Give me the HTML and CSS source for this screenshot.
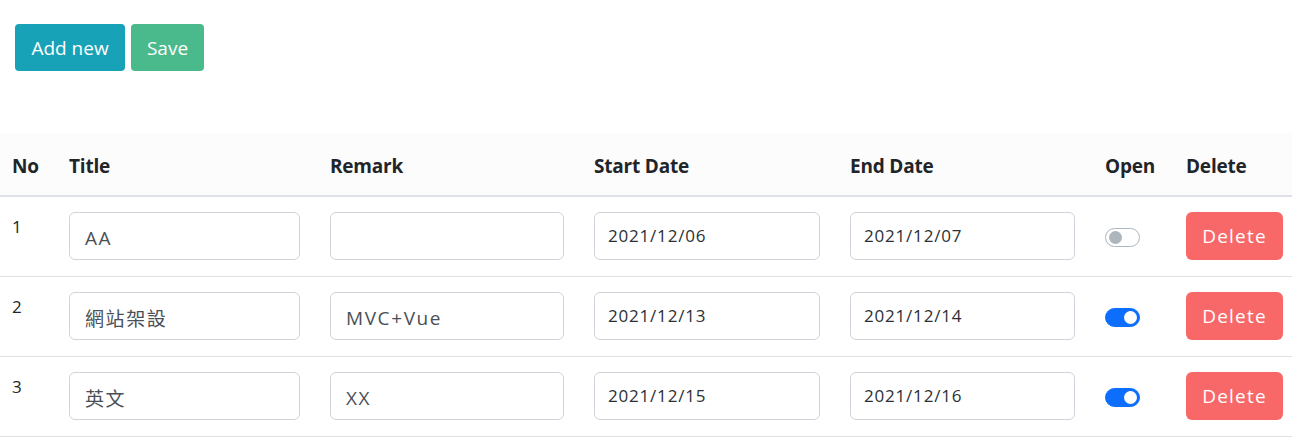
FILE: index.html
```html
<!DOCTYPE html>
<html>
<head>
<meta charset="utf-8">
<link rel="stylesheet" href="styles.css">
</head>
<body>
<div class="toolbar">
  <button class="btn btn-teal">Add new</button>
  <button class="btn btn-green">Save</button>
</div>
<div class="table">
  <div class="row head">
    <div class="cell">No</div>
    <div class="cell">Title</div>
    <div class="cell">Remark</div>
    <div class="cell">Start Date</div>
    <div class="cell">End Date</div>
    <div class="cell">Open</div>
    <div class="cell">Delete</div>
  </div>
  <div class="row">
    <div class="cell num">1</div>
    <div class="cell"><div class="input text">AA</div></div>
    <div class="cell"><div class="input text"></div></div>
    <div class="cell"><div class="input date">2021/12/06</div></div>
    <div class="cell"><div class="input date">2021/12/07</div></div>
    <div class="cell sw"><span class="switch"></span></div>
    <div class="cell"><button class="btn btn-red">Delete</button></div>
  </div>
  <div class="row">
    <div class="cell num">2</div>
    <div class="cell"><div class="input text">網站架設</div></div>
    <div class="cell"><div class="input text">MVC+Vue</div></div>
    <div class="cell"><div class="input date">2021/12/13</div></div>
    <div class="cell"><div class="input date">2021/12/14</div></div>
    <div class="cell sw"><span class="switch on"></span></div>
    <div class="cell"><button class="btn btn-red">Delete</button></div>
  </div>
  <div class="row">
    <div class="cell num">3</div>
    <div class="cell"><div class="input text">英文</div></div>
    <div class="cell"><div class="input text">XX</div></div>
    <div class="cell"><div class="input date">2021/12/15</div></div>
    <div class="cell"><div class="input date">2021/12/16</div></div>
    <div class="cell sw"><span class="switch on"></span></div>
    <div class="cell"><button class="btn btn-red">Delete</button></div>
  </div>
</div>
</body>
</html>
```
FILE: styles.css
```css
* { box-sizing: border-box; }
html, body { margin: 0; padding: 0; background: #fff; }
body {
  font-family: "Open Sans", "Noto Sans CJK TC", sans-serif;
  color: #212529;
  font-size: 17px;
  width: 1292px;
  overflow: hidden;
}
.toolbar {
  display: flex;
  gap: 6px;
  padding: 24px 15px 0;
  height: 133px;
  align-items: flex-start;
}
.btn {
  font-family: inherit;
  border: none;
  border-radius: 4px;
  color: #fff;
  font-size: 19px;
  height: 47px;
  padding: 0;
  cursor: pointer;
}
.btn-teal { background: #17a2b8; width: 110px; }
.btn-green { background: #4ab98b; width: 73px; }
.btn-red {
  background: #f86868;
  width: 97px;
  height: 48px;
  border-radius: 6px;
  letter-spacing: 1.2px;
  font-size: 19px;
}
.table { width: 1320px; }
.row {
  display: grid;
  grid-template-columns: 27px 231px 234px 226px 225px 51px 97px;
  column-gap: 30px;
  padding: 0 12px;
  height: 80px;
  border-bottom: 1px solid #dee2e6;
  align-items: start;
}
.row.head {
  background: #fcfcfc;
  height: 64px;
  border-bottom: 2px solid #dee2e6;
  align-items: center;
  font-weight: 700;
  font-size: 19px;
  letter-spacing: -0.2px;
}
.row.head .cell { padding-top: 3px; }
.cell { white-space: nowrap; }
.row:not(.head) .cell { padding-top: 15px; }
.num { font-size: 17px; padding-top: 16px !important; line-height: 28px; }
.input {
  height: 48px;
  border: 1px solid #ced4da;
  border-radius: 6px;
  background: #fff;
  color: #495057;
  display: flex;
  align-items: center;
  padding: 0 15px;
}
.input.text { font-size: 19px; letter-spacing: 1.6px; padding-top: 4px; }
.input.date { font-size: 17px; letter-spacing: 0.8px; padding: 0 13px 2px; color: #2b3035; }
.sw { padding-top: 31px !important; }
.switch {
  display: block;
  width: 35px;
  height: 19px;
  border: 1px solid #adb5bd;
  border-radius: 10px;
  position: relative;
  background: #fff;
}
.switch::after {
  content: "";
  position: absolute;
  left: 3px;
  top: 2px;
  width: 13px;
  height: 13px;
  border-radius: 50%;
  background: #adb5bd;
}
.switch.on { background: #0d6efd; border-color: #0d6efd; }
.switch.on::after { left: auto; right: 2px; background: #fff; }
```
